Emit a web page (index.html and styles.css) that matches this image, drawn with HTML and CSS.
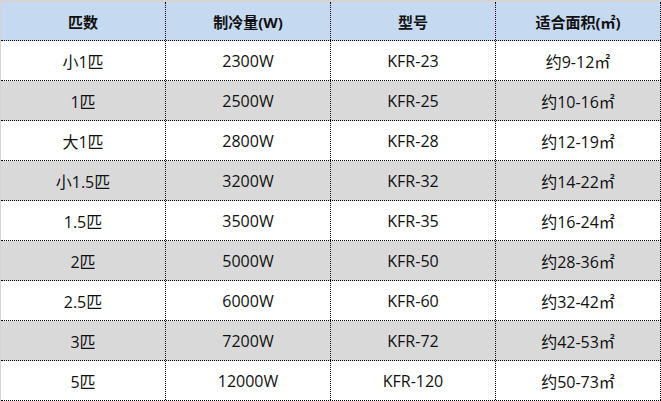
FILE: index.html
```html
<!DOCTYPE html>
<html lang="zh-CN">
<head>
<meta charset="utf-8">
<link rel="stylesheet" href="styles.css">
</head>
<body>
<div class="sheet">
  <div class="row head">
    <div class="cell">匹数</div>
    <div class="cell">制冷量(W)</div>
    <div class="cell">型号</div>
    <div class="cell">适合面积(㎡)</div>
  </div>
  <div class="row">
    <div class="cell">小1匹</div><div class="cell">2300W</div><div class="cell">KFR-23</div><div class="cell">约9-12㎡</div>
  </div>
  <div class="row alt">
    <div class="cell">1匹</div><div class="cell">2500W</div><div class="cell">KFR-25</div><div class="cell">约10-16㎡</div>
  </div>
  <div class="row">
    <div class="cell">大1匹</div><div class="cell">2800W</div><div class="cell">KFR-28</div><div class="cell">约12-19㎡</div>
  </div>
  <div class="row alt">
    <div class="cell">小1.5匹</div><div class="cell">3200W</div><div class="cell">KFR-32</div><div class="cell">约14-22㎡</div>
  </div>
  <div class="row">
    <div class="cell">1.5匹</div><div class="cell">3500W</div><div class="cell">KFR-35</div><div class="cell">约16-24㎡</div>
  </div>
  <div class="row alt">
    <div class="cell">2匹</div><div class="cell">5000W</div><div class="cell">KFR-50</div><div class="cell">约28-36㎡</div>
  </div>
  <div class="row">
    <div class="cell">2.5匹</div><div class="cell">6000W</div><div class="cell">KFR-60</div><div class="cell">约32-42㎡</div>
  </div>
  <div class="row alt">
    <div class="cell">3匹</div><div class="cell">7200W</div><div class="cell">KFR-72</div><div class="cell">约42-53㎡</div>
  </div>
  <div class="row">
    <div class="cell">5匹</div><div class="cell">12000W</div><div class="cell">KFR-120</div><div class="cell">约50-73㎡</div>
  </div>
</div>
</body>
</html>
```
FILE: styles.css
```css
html, body {
  margin: 0;
  padding: 0;
  background: #ffffff;
}
body {
  font-family: "Open Sans", "Noto Sans CJK SC", sans-serif;
  font-size: 16px;
  color: #111111;
}
.sheet {
  width: 660px;
  border-top: 2px solid #d4d4d4;
  border-left: 1px solid #d4d4d4;
}
.row {
  display: grid;
  grid-template-columns: repeat(4, 165px);
  height: 40px;
  border-bottom: 1px dotted #000;
  box-sizing: border-box;
}
.row.head {
  height: 39px;
  background: #c5d9f1;
  font-weight: bold;
  font-size: 15px;
}
.row.alt {
  background: #d9d9d9;
}
.cell {
  display: flex;
  align-items: center;
  justify-content: center;
  border-right: 1px dotted #000;
}
```
